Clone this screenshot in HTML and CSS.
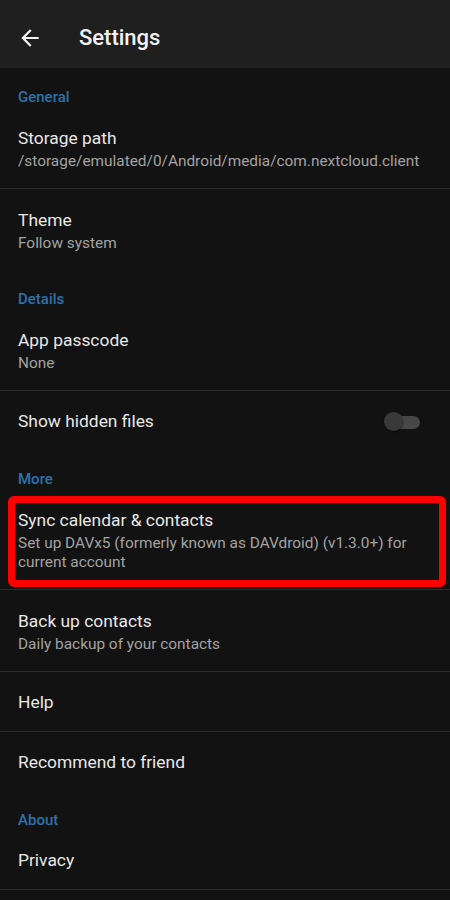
FILE: index.html
```html
<!DOCTYPE html>
<html lang="en">
<head>
<meta charset="utf-8">
<title>Settings</title>
<link rel="stylesheet" href="styles.css">
</head>
<body>
<header class="toolbar">
  <svg class="back" viewBox="0 0 24 24" width="26" height="26" aria-hidden="true">
    <path d="M20 11H7.83l5.59-5.59L12 4l-8 8 8 8 1.41-1.41L7.83 13H20v-2z" fill="#f2f2f2"/>
  </svg>
  <h1 class="title">Settings</h1>
</header>
<main class="list">
  <div class="category">General</div>
  <div class="item">
    <div class="item-title">Storage path</div>
    <div class="item-sub">/storage/emulated/0/Android/media/com.nextcloud.client</div>
  </div>
  <div class="divider"></div>
  <div class="item">
    <div class="item-title">Theme</div>
    <div class="item-sub">Follow system</div>
  </div>

  <div class="category">Details</div>
  <div class="item">
    <div class="item-title">App passcode</div>
    <div class="item-sub">None</div>
  </div>
  <div class="divider"></div>
  <div class="item item-single item-row">
    <div class="item-title">Show hidden files</div>
    <div class="switch"><span class="track"></span><span class="thumb"></span></div>
  </div>

  <div class="category">More</div>
  <div class="item highlighted">
    <div class="item-title">Sync calendar &amp; contacts</div>
    <div class="item-sub">Set up DAVx5 (formerly known as DAVdroid) (v1.3.0+) for current account</div>
  </div>
  <div class="divider"></div>
  <div class="item">
    <div class="item-title">Back up contacts</div>
    <div class="item-sub">Daily backup of your contacts</div>
  </div>
  <div class="divider"></div>
  <div class="item item-single">
    <div class="item-title">Help</div>
  </div>
  <div class="divider"></div>
  <div class="item item-single">
    <div class="item-title">Recommend to friend</div>
  </div>

  <div class="category">About</div>
  <div class="item item-single">
    <div class="item-title">Privacy</div>
  </div>
  <div class="divider"></div>
</main>
</body>
</html>
```

FILE: styles.css
```css
* {
  box-sizing: border-box;
}

html, body {
  margin: 0;
  padding: 0;
  background: #121212;
}

body {
  font-family: Roboto, "Noto Sans", "Liberation Sans", sans-serif;
  color: #e6e6e6;
  width: 450px;
  height: 900px;
  overflow: hidden;
}

.toolbar {
  height: 68px;
  background: #1f1f1f;
  display: flex;
  align-items: center;
  padding-left: 17px;
}

.back {
  display: block;
  margin-top: 8px;
}

.title {
  margin: 0 0 0 36px;
  font-size: 22px;
  font-weight: 500;
  color: #f2f2f2;
  line-height: 26px;
  padding-top: 7px;
}

.list {
  display: flex;
  flex-direction: column;
}

.category {
  padding: 19px 18px 0;
  line-height: 20px;
  height: 39px;
  font-size: 15px;
  font-weight: 500;
  color: #2c72ad;
}

.item {
  position: relative;
  padding: 19px 18px 17px;
  display: flex;
  flex-direction: column;
}

.item-single {
  padding-top: 18px;
  padding-bottom: 17px;
}

.item-title {
  font-size: 17.4px;
  line-height: 24px;
  color: #e8e8e8;
}

.item-sub {
  font-size: 15.4px;
  line-height: 19px;
  padding-top: 2px;
  color: #a3a3a3;
}

.item-row {
  flex-direction: row;
  align-items: center;
  justify-content: space-between;
}

.divider {
  height: 1px;
  background: #2c2c2c;
}

.switch {
  position: relative;
  width: 36px;
  height: 20px;
  margin-right: 12px;
  margin-top: 2px;
}

.track {
  position: absolute;
  left: 4px;
  top: 4px;
  width: 32px;
  height: 13px;
  border-radius: 7px;
  background: #474747;
}

.thumb {
  position: absolute;
  left: 0;
  top: 0;
  width: 19px;
  height: 19px;
  border-radius: 50%;
  background: #393939;
  box-shadow: 0 1px 2px rgba(0, 0, 0, 0.5);
}

.highlighted::after {
  content: "";
  position: absolute;
  left: 8px;
  top: 7px;
  right: 4px;
  bottom: 2px;
  border: 7px solid #ff0000;
  border-radius: 6px;
  pointer-events: none;
}
```
